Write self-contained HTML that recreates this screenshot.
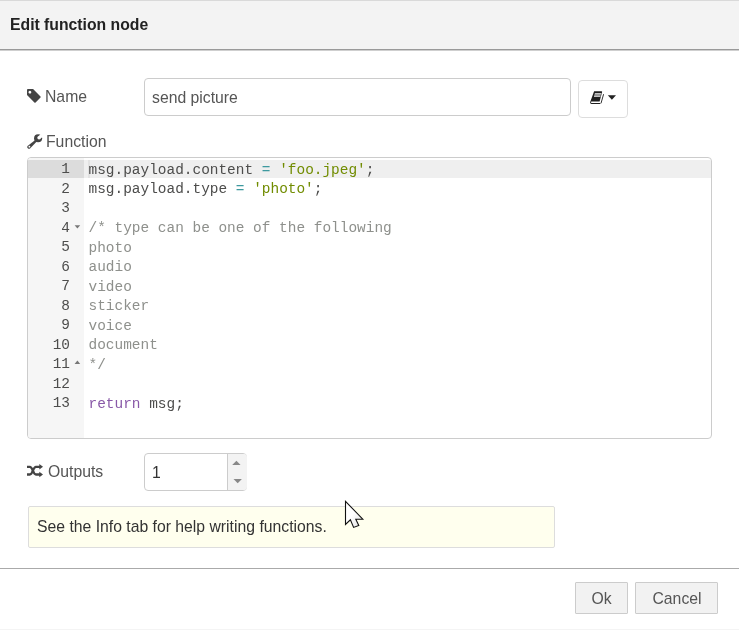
<!DOCTYPE html>
<html><head><meta charset="utf-8">
<style>
html,body{margin:0;padding:0;background:#fff;width:739px;height:630px;overflow:hidden;position:relative;font-family:"Liberation Sans",sans-serif;}
.a{position:absolute;will-change:transform;}
#topline{left:0;top:0;width:739px;height:1px;background:#d9d9d9;}
#hdr{left:0;top:1px;width:739px;height:48px;background:#f3f3f3;}
#hdrb1{left:0;top:49px;width:739px;height:1px;background:#999;}
#hdrb2{left:0;top:50px;width:739px;height:1px;background:#cfcfcf;}
#title{left:10px;top:16px;font-weight:bold;font-size:15.75px;line-height:18px;color:#222;white-space:nowrap;}
.lbl{font-size:15.75px;line-height:18px;color:#555;white-space:nowrap;}
.inp{box-sizing:border-box;border:1px solid #ccc;border-radius:4px;background:#fff;}
#name{left:144px;top:78px;width:427px;height:38px;}
#nametxt{left:152px;top:89px;font-size:15.75px;line-height:18px;color:#555;white-space:nowrap;}
#libbtn{left:578px;top:80px;width:50px;height:38px;box-sizing:border-box;border:1px solid #ddd;border-radius:4px;background:#fff;}
#editor{left:27px;top:157px;width:685px;height:282px;box-sizing:border-box;border:1px solid #ccc;border-radius:4px;background:#fff;overflow:hidden;}
#gutter{left:0;top:0;width:56px;height:100%;background:#f6f6f6;}
.code{font-family:"Liberation Mono",monospace;font-size:14.45px;white-space:pre;color:#4d4d4c;}
.ln{position:absolute;left:0;width:42px;text-align:right;height:19.5px;line-height:19.5px;margin-top:2px;}
.cl{position:absolute;left:60.5px;height:19.5px;line-height:19.5px;margin-top:2.5px;}
#gact{left:0;top:2px;width:56px;height:18px;background:#dcdcdc;}
#tact{left:56px;top:2px;width:640px;height:18px;background:#efefef;}
#caret{left:60px;top:2px;width:2px;height:18px;background:#e2e2e2;}
.fold{left:47px;width:0;height:0;border-left:2.5px solid transparent;border-right:2.5px solid transparent;margin-top:0px;}
.fold.dn{border-top:3px solid #888;transform:translateY(9px);}
.fold.up{border-bottom:3px solid #888;transform:translateY(7.5px);}
.op{color:#3e999f}.st{color:#718c00}.cm{color:#8e908c}.kw{color:#8959a8}
#spin{left:144px;top:453px;width:103px;height:38px;}
#tips{left:28px;top:506px;width:527px;height:42px;box-sizing:border-box;border:1px solid #ddd;border-radius:2px;background:#ffffee;}
#footb{left:0;top:568px;width:739px;height:1px;background:#aaa;}
.btn{box-sizing:border-box;border:1px solid #ccc;background:#f2f2f2;border-radius:1px;font-size:15.75px;color:#555;text-align:center;}
#botline{left:0;top:629px;width:739px;height:1px;background:#f4f4f4;}
</style></head><body>
<div class="a" id="topline"></div>
<div class="a" id="hdr"></div>
<div class="a" id="hdrb1"></div>
<div class="a" id="hdrb2"></div>
<div class="a" id="title">Edit function node</div>

<!-- Name row -->
<svg class="a" style="left:24px;top:86px" width="22" height="20" viewBox="0 0 22 20"><path d="M3 3.9 Q3 3 3.9 3 L9.1 3 L16.5 10.4 Q17 11 16.5 11.6 L11.6 16.5 Q11 17 10.4 16.5 L3 9.1 Z M5.9 4.8 A1.4 1.4 0 1 0 5.91 4.8 Z" fill="#444" fill-rule="evenodd"/></svg>
<div class="a lbl" style="left:45px;top:88px">Name</div>
<div class="a inp" id="name"></div>
<div class="a" id="nametxt">send picture</div>
<div class="a" id="libbtn"></div>
<svg class="a" style="left:586px;top:86px" width="34" height="22" viewBox="0 0 34 22"><path d="M8.1 5.2 L15.5 5.2 Q16.4 5.2 16.1 6.1 L13.6 15.4 L5.6 15.4 Q4.9 15.6 4.9 16.3 Q5 16.9 5.7 16.9 L14.4 16.9 L14.3 17.9 L5.5 17.9 Q4 17.8 4.1 16.3 Z" fill="#1e1e1e"/><path d="M17.6 8.2 L15 17.3" fill="none" stroke="#1e1e1e" stroke-width="0.9"/><path d="M8.6 7.9 L15.1 7.9 L14.5 10.1 L8 10.1 Z" fill="#9a9a9a"/><path d="M8.8 7.5 L15.3 7.5 M8 10.5 L14.5 10.5" stroke="#eee" stroke-width="0.8"/><path d="M21.8 9.2 L30 9.2 L25.9 13.8 Z" fill="#222"/></svg>

<!-- Function label -->
<svg class="a" style="left:24px;top:131px" width="22" height="20" viewBox="0 0 22 20"><g fill="#444"><circle cx="14.1" cy="7.2" r="4.05"/><path d="M11.2 9 L12.8 10.6 L6 17.4 Q5 18.3 4 17.4 L3.6 17 Q2.7 16 3.6 15 Z"/></g><g fill="#fff"><circle cx="15.1" cy="6.8" r="1.8"/><path d="M14.2 5.6 L16.8 3 L19.5 5.7 L16.2 7.6 Z"/><circle cx="5.4" cy="15.7" r="0.9"/></g></svg>
<div class="a lbl" style="left:46px;top:133px">Function</div>

<!-- Editor -->
<div class="a" id="editor">
  <div class="a" id="gutter"></div>
  <div class="a" id="gact"></div>
  <div class="a" id="tact"></div>
  <div class="a" id="caret"></div>
  <div class="code ln" style="top:0.0px">1</div>
  <div class="code cl" style="top:0.0px"><span>msg.payload.content</span> <span class="op">=</span> <span class="st">'foo.jpeg'</span>;</div>
  <div class="code ln" style="top:19.5px">2</div>
  <div class="code cl" style="top:19.5px">msg.payload.type <span class="op">=</span> <span class="st">'photo'</span>;</div>
  <div class="code ln" style="top:39.0px">3</div>
  <div class="code cl" style="top:39.0px"></div>
  <div class="code ln" style="top:58.5px">4</div>
  <div class="code cl" style="top:58.5px"><span class="cm">/* type can be one of the following</span></div>
  <div class="code ln" style="top:78.0px">5</div>
  <div class="code cl" style="top:78.0px"><span class="cm">photo</span></div>
  <div class="code ln" style="top:97.5px">6</div>
  <div class="code cl" style="top:97.5px"><span class="cm">audio</span></div>
  <div class="code ln" style="top:117.0px">7</div>
  <div class="code cl" style="top:117.0px"><span class="cm">video</span></div>
  <div class="code ln" style="top:136.5px">8</div>
  <div class="code cl" style="top:136.5px"><span class="cm">sticker</span></div>
  <div class="code ln" style="top:156.0px">9</div>
  <div class="code cl" style="top:156.0px"><span class="cm">voice</span></div>
  <div class="code ln" style="top:175.5px">10</div>
  <div class="code cl" style="top:175.5px"><span class="cm">document</span></div>
  <div class="code ln" style="top:195.0px">11</div>
  <div class="code cl" style="top:195.0px"><span class="cm">*/</span></div>
  <div class="code ln" style="top:214.5px">12</div>
  <div class="code cl" style="top:214.5px"></div>
  <div class="code ln" style="top:234.0px">13</div>
  <div class="code cl" style="top:234.0px"><span class="kw">return</span> msg;</div>
</div>

<svg class="a" style="left:70px;top:220px" width="14" height="150" viewBox="70 220 14 150"><path d="M74.6 225.2 L80.2 225.2 L77.4 228.6 Z" fill="#777"/><path d="M74.6 364 L80.2 364 L77.4 360.6 Z" fill="#777"/></svg>
<!-- Outputs row -->
<svg class="a" style="left:24px;top:460px" width="22" height="22" viewBox="0 0 22 22"><g fill="none" stroke="#444" stroke-width="2.3"><path d="M3 6.8 L5.8 6.8 C9 6.8 8.8 14.5 12 14.5 L16 14.5"/><path d="M3 14.5 L5.8 14.5 C9 14.5 8.8 6.8 12 6.8 L16 6.8"/></g><g fill="#444"><path d="M15.3 4 L19 6.75 L15.3 9.5 Z"/><path d="M15.3 11.75 L19 14.5 L15.3 17.25 Z"/></g></svg>
<div class="a lbl" style="left:47.5px;top:463px">Outputs</div>
<div class="a inp" id="spin"></div>
<div class="a" style="left:227px;top:454px;width:19px;height:36px;background:#f3f3f3;border-left:1px solid #ccc;border-radius:0 3px 3px 0;"></div>
<svg class="a" style="left:228px;top:454px" width="18" height="36" viewBox="0 0 18 36"><path d="M4.2 10.9 L12.6 10.9 L8.4 6.8 Z" fill="#888"/><path d="M5.5 25.1 L13.9 25.1 L9.7 29.3 Z" fill="#888"/></svg>
<div class="a" style="left:152px;top:464px;font-size:15.75px;line-height:18px;color:#333">1</div>

<div class="a" id="tips"></div>
<div class="a lbl" style="left:37.3px;top:518px;color:#333">See the Info tab for help writing functions.</div>

<div class="a" id="footb"></div>
<div class="a btn" style="left:575px;top:582px;width:53px;height:32px;line-height:31px">Ok</div>
<div class="a btn" style="left:635px;top:582px;width:83px;height:32px;line-height:31px;text-indent:1px">Cancel</div>
<div class="a" id="botline"></div>
<svg class="a" style="left:335px;top:495px" width="40" height="40" viewBox="0 0 40 40"><defs><linearGradient id="cg" x1="0" y1="0" x2="1" y2="1"><stop offset="0.45" stop-color="#fff"/><stop offset="1" stop-color="#dcdcdc"/></linearGradient></defs><path d="M10.5 6.3 L10.5 29.5 L15.4 24.8 L18.6 32.4 L23.8 30.5 L20.8 24.2 L27.8 24.2 Z" fill="url(#cg)" stroke="#111" stroke-width="1.1" stroke-linejoin="miter"/></svg>
</body></html>
